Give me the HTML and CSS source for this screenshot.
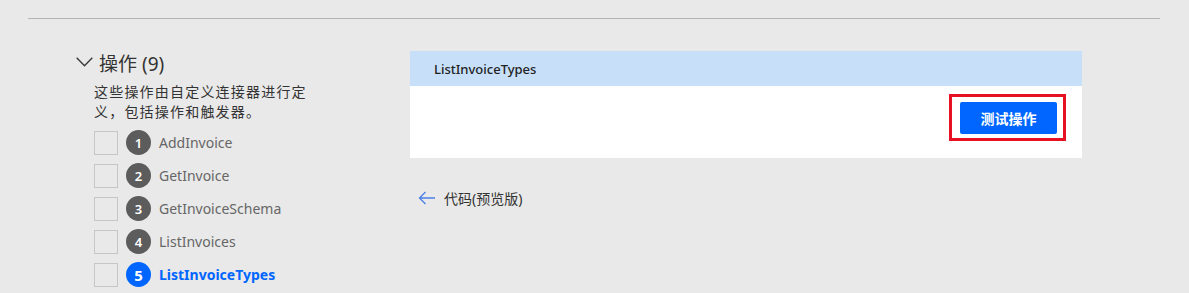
FILE: index.html
```html
<!DOCTYPE html>
<html lang="zh-CN">
<head>
<meta charset="utf-8">
<link rel="stylesheet" href="styles.css">
</head>
<body>
<div class="topline"></div>
<div class="main">
  <div class="side">
    <div class="heading">
      <svg class="chev" width="17" height="10" viewBox="0 0 17 10"><path d="M0.7 0.7 L8.5 8.8 L16.3 0.7" fill="none" stroke="#3a3a3a" stroke-width="1.4"/></svg>
      <span>操作 (9)</span>
    </div>
    <p class="desc">这些操作由自定义连接器进行定义，包括操作和触发器。</p>
    <ul class="ops">
      <li class="op"><span class="box"></span><span class="num">1</span><span class="name">AddInvoice</span></li>
      <li class="op"><span class="box"></span><span class="num">2</span><span class="name">GetInvoice</span></li>
      <li class="op"><span class="box"></span><span class="num">3</span><span class="name">GetInvoiceSchema</span></li>
      <li class="op"><span class="box"></span><span class="num">4</span><span class="name">ListInvoices</span></li>
      <li class="op active"><span class="box"></span><span class="num">5</span><span class="name">ListInvoiceTypes</span></li>
    </ul>
  </div>
  <div class="content">
    <div class="card">
      <div class="card-head">ListInvoiceTypes</div>
      <div class="card-body">
        <div class="highlight"><button class="btn">测试操作</button></div>
      </div>
    </div>
    <div class="code-link">
      <svg class="arrow" width="18" height="14" viewBox="0 0 18 14"><path d="M17 7 H1.5 M7.5 1 L1.5 7 L7.5 13" fill="none" stroke="#4a7fe6" stroke-width="1.3"/></svg>
      <span>代码(预览版)</span>
    </div>
  </div>
</div>
</body>
</html>
```
FILE: styles.css
```css
* { box-sizing: border-box; }
html, body {
  margin: 0;
  padding: 0;
  background: #e9e9e9;
  font-family: "Segoe UI", "Noto Sans", "Noto Sans CJK SC", sans-serif;
  color: #333;
}
.topline {
  height: 1px;
  background: #b4b4b4;
  margin: 18px 29px 0 28px;
}
.main {
  display: flex;
  padding-left: 76px;
  margin-top: 32px;
}
.side {
  width: 334px;
  flex: none;
}
.heading {
  display: flex;
  align-items: center;
  gap: 6px;
  height: 26px;
  font-size: 19px;
  color: #333;
}
.heading span { font-size: 19px; line-height: 26px; }
.chev { flex: none; margin-top: -4px; }
.desc {
  margin: 5px 0 0 18px;
  width: 222px;
  font-size: 14px;
  line-height: 20px;
  color: #333;
  letter-spacing: 1.2px;
}
.ops {
  list-style: none;
  margin: 4px 0 0 18px;
  padding: 0;
}
.op {
  display: flex;
  align-items: center;
  height: 33px;
}
.box {
  width: 24px;
  height: 24px;
  border: 1px solid #c6c6c6;
  flex: none;
}
.num {
  width: 25px;
  height: 25px;
  border-radius: 50%;
  background: #5c5c5c;
  color: #fff;
  font-size: 13px;
  font-weight: 600;
  display: flex;
  align-items: center;
  justify-content: center;
  margin-left: 8px;
  flex: none;
}
.name {
  margin-left: 8px;
  font-size: 14px;
  color: #666;
}
.active .num { background: #0066ff; font-size: 15px; font-weight: 700; }
.active .name { color: #0066ff; font-weight: 700; }
.content {
  width: 672px;
  flex: none;
}
.card { background: #fff; }
.card-head {
  height: 35px;
  background: #c7dff9;
  padding-left: 24px;
  display: flex;
  align-items: center;
  font-size: 13px;
  font-weight: 500;
  color: #222;
}
.card-body {
  height: 72px;
  display: flex;
  justify-content: flex-end;
  align-items: flex-start;
  padding: 8px 16px 0 0;
}
.highlight {
  border: 3px solid #e81123;
  padding: 5px 6px 4px 8px;
}
.btn {
  display: block;
  width: 97px;
  height: 32px;
  background: #0066ff;
  color: #fff;
  border: none;
  border-radius: 2px;
  font-family: "Noto Sans CJK SC", sans-serif;
  font-size: 14px;
  font-weight: 700;
  padding: 0;
}
.code-link {
  display: flex;
  align-items: center;
  gap: 8px;
  margin: 30px 0 0 8px;
  height: 20px;
  font-size: 14px;
  color: #333;
}
.arrow { flex: none; }
```
